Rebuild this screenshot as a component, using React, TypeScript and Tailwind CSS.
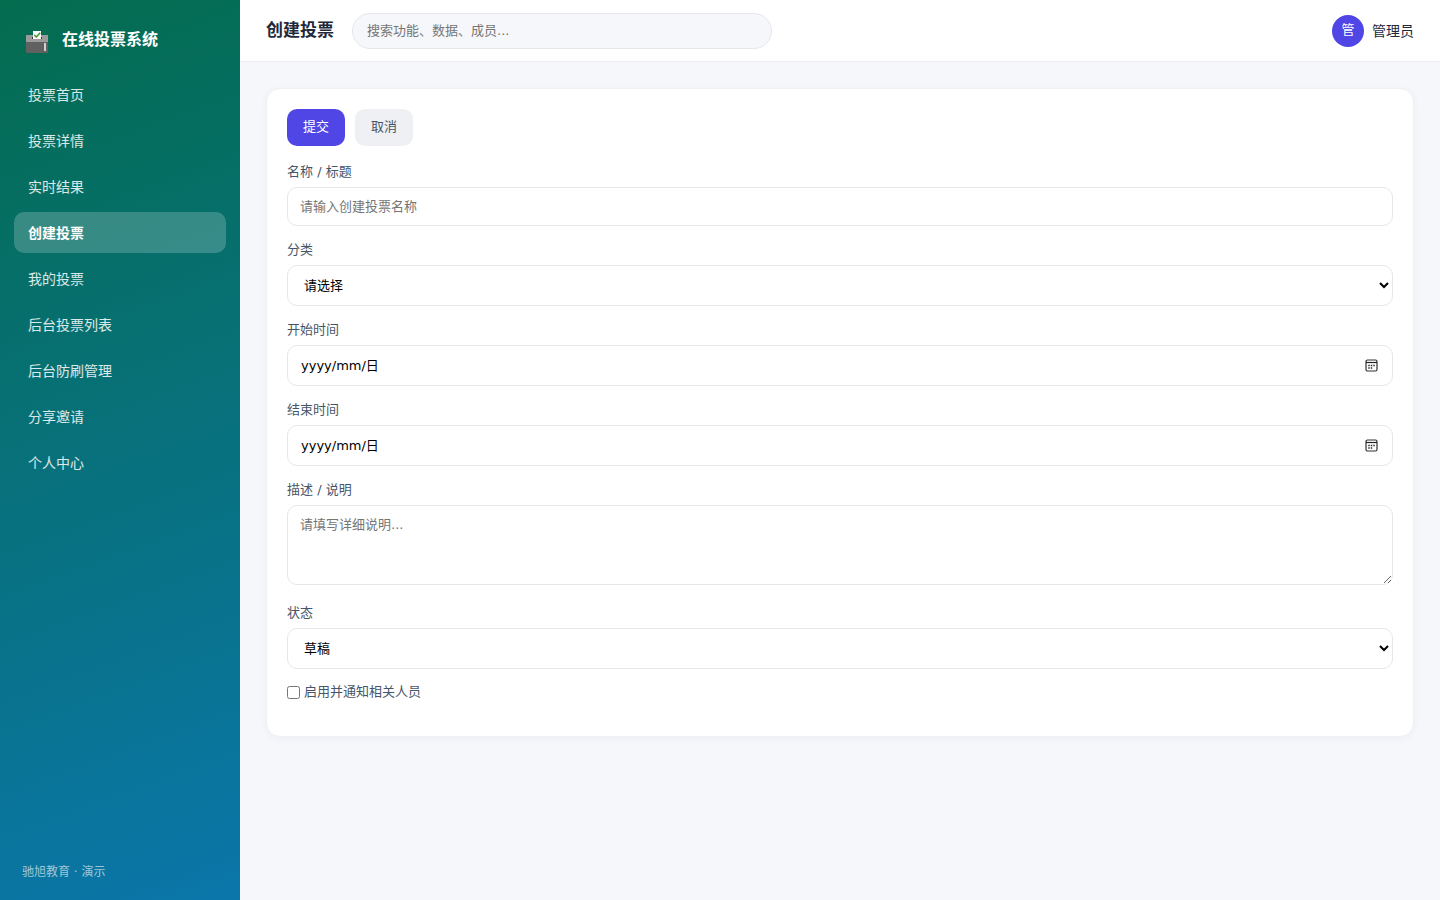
import { useState, type ReactNode } from "react";

const navItems = ["投票首页", "投票详情", "实时结果", "创建投票", "我的投票", "后台投票列表", "后台防刷管理", "分享邀请", "个人中心"];

const control =
  "block w-full rounded-[10px] border border-[#e5e7eb] bg-white text-[13px] outline-none focus:border-[#4f46e5]";

function BallotBox() {
  return (
    <svg width="24" height="28" viewBox="0 -4 24 28" aria-hidden="true" className="shrink-0">
      <path d="M1 5h22v7H1z" fill="#9b9b9b" />
      <path d="M1 12h22v10a1 1 0 0 1-1 1H2a1 1 0 0 1-1-1z" fill="#616161" />
      <path d="M7 7h10v2H7z" fill="#45394f" />
      <path d="M8 1h8v8H8z" fill="#fafafa" />
      <path d="M9.300 5l2 2 3.900-4.300" fill="none" stroke="#3f9426" strokeWidth="1.500" />
      <path d="M19 13h2v8h-2z" fill="#d0d0d0" />
    </svg>
  );
}

function CalendarIcon() {
  return (
    <svg width="15" height="15" viewBox="0 0 15 15" fill="none" aria-hidden="true">
      <rect x="2" y="2" width="11" height="11" rx="1.500" stroke="#333" strokeWidth="1.200" />
      <path d="M2 4.500h11" stroke="#222" strokeWidth="1.200" />
      <path d="M6.800 7.500h1.400M9.300 7.500h1.400M4.300 7.500h1.400M4.300 10h1.400M6.800 10h1.400" stroke="#222" strokeWidth="1.300" />
    </svg>
  );
}

function Field({ id, label, children }: { id: string; label: string; children: ReactNode }) {
  return (
    <div className="mb-[14px]">
      <label htmlFor={id} className="mb-[6px] block text-[13px] leading-[19px] text-[#475569]">
        {label}
      </label>
      {children}
    </div>
  );
}

function DateField({ id, label }: { id: string; label: string }) {
  return (
    <Field id={id} label={label}>
      <div className="relative">
        <input
          id={id}
          type="text"
          placeholder="yyyy/mm/日"
          className={`${control} h-[41px] px-[13px] text-black placeholder:text-black`}
        />
        <button type="button" aria-label={`选择${label}`} className="absolute inset-y-0 right-[14px] flex items-center">
          <CalendarIcon />
        </button>
      </div>
    </Field>
  );
}

export default function App() {
  const [active, setActive] = useState("创建投票");
  return (
    <div className="flex min-h-screen bg-[#f5f7fb] font-['DejaVu_Sans','Noto_Sans_CJK_SC',sans-serif] text-sm text-[#1e293b]">
      <aside className="flex w-60 shrink-0 flex-col bg-[linear-gradient(160deg,#046c4e,#0b76aa)] px-[14px] pt-5 pb-[18px] text-white">
        <div className="mb-[14px] flex h-10 items-center gap-[13px] px-[11px] text-base font-bold">
          <BallotBox />
          <span>在线投票系统</span>
        </div>
        <nav className="flex flex-1 flex-col gap-[5px]">
          {navItems.map((item) => (
            <a
              key={item}
              href="#"
              aria-current={item === active ? "page" : undefined}
              onClick={(e) => {
                e.preventDefault();
                setActive(item);
              }}
              className={
                item === active
                  ? "flex h-[41px] items-center rounded-[10px] bg-white/20 px-[14px] font-bold text-white"
                  : "flex h-[41px] items-center rounded-[10px] px-[14px] text-white/85"
              }
            >
              {item}
            </a>
          ))}
        </nav>
        <p className="px-2 text-xs leading-5 text-white/60">驰旭教育 · 演示</p>
      </aside>

      <div className="min-w-0 flex-1">
        <header className="flex h-[62px] items-center justify-between border-b border-[#eceef2] bg-white px-[26px]">
          <div className="flex flex-1 items-center gap-[18px]">
            <h1 className="text-[17px] font-bold text-[#1e293b]">创建投票</h1>
            <input
              type="search"
              aria-label="搜索"
              placeholder="搜索功能、数据、成员..."
              className="h-9 w-full max-w-[420px] rounded-full border border-[#e5e7eb] bg-[#f5f7fb] px-[14px] text-[13px] outline-none placeholder:text-[#757575]"
            />
          </div>
          <div className="flex items-center gap-2">
            <span className="flex size-8 items-center justify-center rounded-full bg-[#4f46e5] text-[13px] text-white">管</span>
            <span>管理员</span>
          </div>
        </header>

        <main className="p-[26px]">
          <form
            onSubmit={(e) => e.preventDefault()}
            className="rounded-[14px] border border-[#eef0f4] bg-white p-5 shadow-[0_2px_8px_rgba(30,41,59,0.04)]"
          >
            <div className="mb-4 flex gap-[10px]">
              <button type="submit" className="h-[37px] rounded-[10px] bg-[#4f46e5] px-4 text-[13px] text-white">
                提交
              </button>
              <button type="button" className="h-[37px] rounded-[10px] bg-[#eef0f4] px-4 text-[13px] text-[#475569]">
                取消
              </button>
            </div>
            <Field id="name" label="名称 / 标题">
              <input
                id="name"
                type="text"
                placeholder="请输入创建投票名称"
                className={`${control} h-[39px] px-3 placeholder:text-[#757575]`}
              />
            </Field>
            <Field id="category" label="分类">
              <select id="category" className={`${control} h-[41px] px-3 text-black`}>
                <option>请选择</option>
              </select>
            </Field>
            <DateField id="start" label="开始时间" />
            <DateField id="end" label="结束时间" />
            <Field id="description" label="描述 / 说明">
              <textarea
                id="description"
                placeholder="请填写详细说明..."
                className={`${control} mb-[18px] h-20 px-3 py-[10px] placeholder:text-[#757575]`}
              />
            </Field>
            <Field id="status" label="状态">
              <select id="status" className={`${control} h-[41px] px-3 text-black`}>
                <option>草稿</option>
              </select>
            </Field>
            <label className="mb-[14px] flex h-[19px] items-center gap-1 text-[13px] text-[#475569]">
              <input type="checkbox" className="size-[13px]" />
              启用并通知相关人员
            </label>
          </form>
        </main>
      </div>
    </div>
  );
}
